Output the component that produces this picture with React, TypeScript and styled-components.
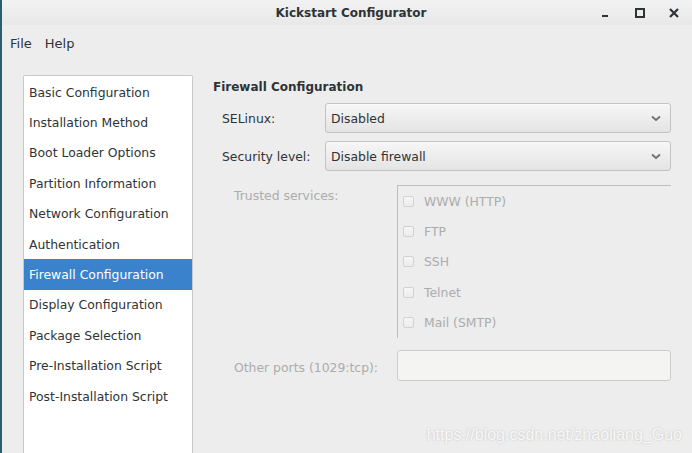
import React from "react";
import styled, { createGlobalStyle } from "styled-components";

const GlobalStyle = createGlobalStyle`
  html, body {
    margin: 0;
    padding: 0;
    background: #ededed;
    overflow: hidden;
  }
  body {
    font-family: "DejaVu Sans", "Noto Sans", sans-serif;
  }
`;

const Window = styled.div`
  position: relative;
  width: 692px;
  height: 453px;
  background: #ededed;
  border-left: 2px solid #2b5f6e;
  box-sizing: border-box;
  display: flex;
  flex-direction: column;
  overflow: hidden;
`;

const TitleBar = styled.div`
  height: 25px;
  flex: none;
  display: flex;
  align-items: center;
  justify-content: center;
  position: relative;
  background: linear-gradient(#f2f2f2, #e8e8e8);
  font-size: 12px;
  font-weight: bold;
  color: #2e3436;
  padding-left: 8px;
`;

const Controls = styled.div`
  position: absolute;
  right: 12px;
  top: 0;
  height: 25px;
  display: flex;
  align-items: center;
  gap: 22px;
`;

const ControlIcon = styled.svg`
  width: 12px;
  height: 12px;
  display: block;
`;

const MenuBar = styled.div`
  height: 36px;
  flex: none;
  display: flex;
  align-items: center;
  gap: 13px;
  padding-left: 8px;
  font-size: 13px;
  color: #2e3436;
`;

const Body = styled.div`
  flex: 1;
  display: flex;
  padding: 14px 22px 0 21px;
  gap: 20px;
  min-height: 0;
`;

const Sidebar = styled.ul`
  width: 168px;
  flex: none;
  margin: 0;
  padding: 1px 0 0;
  list-style: none;
  background: #fff;
  border: 1px solid #c9c9c9;
  border-bottom: none;
  border-radius: 2px 2px 0 0;
`;

const NavItem = styled.li<{ $active?: boolean }>`
  height: 30.4px;
  display: flex;
  align-items: center;
  padding-left: 5px;
  font-size: 12.4px;
  color: ${(p) => (p.$active ? "#ffffff" : "#2e3436")};
  background: ${(p) => (p.$active ? "#3b82cc" : "transparent")};
  white-space: nowrap;
`;

const Panel = styled.div`
  flex: 1;
  display: flex;
  flex-direction: column;
`;

const Heading = styled.div`
  font-size: 12px;
  font-weight: bold;
  color: #2e3436;
  margin: 5px 0 9px;
`;

const FormRow = styled.div`
  display: flex;
  align-items: center;
  height: 30px;
  margin-bottom: 8px;
`;

const Label = styled.div<{ $muted?: boolean }>`
  width: 112px;
  flex: none;
  padding-left: ${(p) => (p.$muted ? "21px" : "9px")};
  box-sizing: border-box;
  font-size: 12.4px;
  color: ${(p) => (p.$muted ? "#acacac" : "#2e3436")};
  white-space: nowrap;
`;

const Select = styled.div`
  flex: 1;
  height: 30px;
  box-sizing: border-box;
  border: 1px solid #c3c3c3;
  border-radius: 3px;
  background: linear-gradient(#f6f6f6, #e4e4e4);
  box-shadow: inset 0 1px 0 #fbfbfb;
  display: flex;
  align-items: center;
  justify-content: space-between;
  padding: 0 9px 0 5px;
  font-size: 12.4px;
  color: #2e3436;
`;

const Chevron = styled.svg`
  width: 10px;
  height: 7px;
  display: block;
`;

const ServicesRow = styled.div`
  display: flex;
  margin-top: 6px;
`;

const ServicesLabel = styled(Label)`
  width: 184px;
  padding-top: 3px;
`;

const ServiceList = styled.div`
  width: 274px;
  height: 153px;
  box-sizing: border-box;
  border-top: 1px solid #bdbdbd;
  border-left: 1px solid #bdbdbd;
`;

const Service = styled.label`
  height: 30.4px;
  display: flex;
  align-items: center;
  gap: 10px;
  padding-left: 5px;
  font-size: 12.4px;
  color: #acacac;
`;

const Box = styled.span`
  width: 11px;
  height: 11px;
  box-sizing: border-box;
  border: 1px solid #d2d2d2;
  border-radius: 2px;
  background: linear-gradient(#f6f6f6, #ececec);
`;

const PortsRow = styled.div`
  display: flex;
  align-items: center;
  margin-top: 12px;
`;

const PortsInput = styled.div`
  width: 274px;
  height: 31px;
  box-sizing: border-box;
  border: 1px solid #cdcdcd;
  border-radius: 3px;
  background: #f4f4f2;
`;

const Watermark = styled.div`
  position: absolute;
  right: 10px;
  bottom: 9px;
  font-family: "Liberation Sans", Arial, sans-serif;
  font-size: 16px;
  color: #f8f8f8;
  text-shadow: 0 0 2px #bdbdbd;
`;

const navItems = [
  "Basic Configuration",
  "Installation Method",
  "Boot Loader Options",
  "Partition Information",
  "Network Configuration",
  "Authentication",
  "Firewall Configuration",
  "Display Configuration",
  "Package Selection",
  "Pre-Installation Script",
  "Post-Installation Script",
];

const services = ["WWW (HTTP)", "FTP", "SSH", "Telnet", "Mail (SMTP)"];

const ArrowDown = () => (
  <Chevron viewBox="0 0 10 7">
    <path d="M1 1.5 L5 5 L9 1.5" fill="none" stroke="#6f7172" strokeWidth="1.8" />
  </Chevron>
);

export default function App() {
  return (
    <>
      <GlobalStyle />
      <Window>
        <TitleBar>
          Kickstart Configurator
          <Controls>
            <ControlIcon viewBox="0 0 12 12">
              <rect x="2" y="8" width="6" height="2" fill="#2e3436" />
            </ControlIcon>
            <ControlIcon viewBox="0 0 12 12">
              <rect x="2" y="2" width="8" height="8" fill="none" stroke="#2e3436" strokeWidth="2" />
            </ControlIcon>
            <ControlIcon viewBox="0 0 12 12">
              <path d="M2 2 L10 10 M10 2 L2 10" stroke="#2e3436" strokeWidth="2.2" />
            </ControlIcon>
          </Controls>
        </TitleBar>
        <MenuBar>
          <span>File</span>
          <span>Help</span>
        </MenuBar>
        <Body>
          <Sidebar>
            {navItems.map((item) => (
              <NavItem key={item} $active={item === "Firewall Configuration"}>
                {item}
              </NavItem>
            ))}
          </Sidebar>
          <Panel>
            <Heading>Firewall Configuration</Heading>
            <FormRow>
              <Label>SELinux:</Label>
              <Select>
                Disabled
                <ArrowDown />
              </Select>
            </FormRow>
            <FormRow>
              <Label>Security level:</Label>
              <Select>
                Disable firewall
                <ArrowDown />
              </Select>
            </FormRow>
            <ServicesRow>
              <ServicesLabel $muted>Trusted services:</ServicesLabel>
              <ServiceList>
                {services.map((s) => (
                  <Service key={s}>
                    <Box />
                    {s}
                  </Service>
                ))}
              </ServiceList>
            </ServicesRow>
            <PortsRow>
              <ServicesLabel $muted>Other ports (1029:tcp):</ServicesLabel>
              <PortsInput />
            </PortsRow>
          </Panel>
        </Body>
        <Watermark>https://blog.csdn.net/zhaoliang_Guo</Watermark>
      </Window>
    </>
  );
}
